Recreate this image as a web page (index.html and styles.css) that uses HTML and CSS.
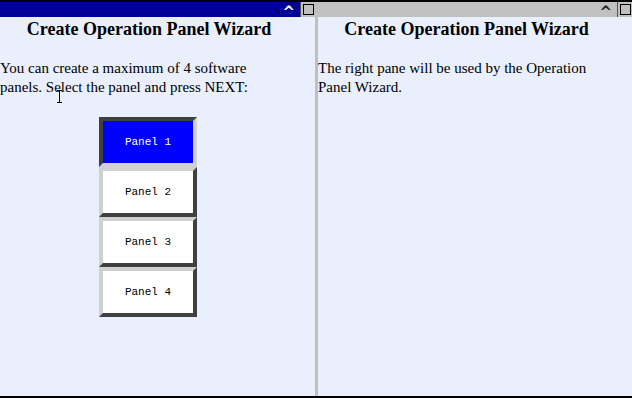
FILE: index.html
```html
<!DOCTYPE html>
<html lang="en">
<head>
    <meta charset="UTF-8">
    <title>Create Operation Panel Wizard</title>
    <link rel="stylesheet" href="styles.css">
</head>
<body>
    <div class="frame">
        <div class="pane left">
            <div class="titlebar active">
                <span class="caret">^</span>
                <span class="maxbox"><span></span></span>
            </div>
            <div class="content">
                <h1>Create Operation Panel Wizard</h1>
                <p class="intro">You can create a maximum of 4 software panels. Select the panel and press NEXT:</p>
                <div class="panels">
                    <button class="panel-btn selected">Panel 1</button>
                    <button class="panel-btn">Panel 2</button>
                    <button class="panel-btn">Panel 3</button>
                    <button class="panel-btn">Panel 4</button>
                </div>
                <!-- mouse pointer in the capture -->
                <svg class="ibeam" width="7" height="13" viewBox="0 0 7 13">
                    <path d="M1 0.5h5M3.5 0.5v12M1 12.5h5" stroke="#000" stroke-width="1" fill="none"/>
                </svg>
            </div>
        </div>
        <div class="divider"></div>
        <div class="pane right">
            <div class="titlebar">
                <span class="caret">^</span>
                <span class="maxbox"><span></span></span>
            </div>
            <div class="content">
                <h1>Create Operation Panel Wizard</h1>
                <p>The right pane will be used by the Operation Panel Wizard.</p>
            </div>
        </div>
    </div>
</body>
</html>
```

FILE: styles.css
```css
html, body {
    margin: 0;
    padding: 0;
    height: 100%;
}
body {
    font-family: 'Liberation Serif', 'Times New Roman', serif;
    font-size: 15px;
    color: #000;
    background: #e9effc;
    overflow: hidden;
}
.frame {
    display: flex;
    height: 394px;
    border-top: 2px solid #000;
    border-bottom: 2px solid #000;
}
.pane {
    display: flex;
    flex-direction: column;
    background: #e9effc;
}
.pane.left {
    width: 315px;
}
.pane.right {
    flex: 1;
}
.divider {
    width: 3px;
    background: #c0c0c0;
}
.titlebar {
    height: 15px;
    background: #c0c0c0;
    display: flex;
    justify-content: flex-end;
    align-items: center;
}
.titlebar.active {
    background: #000099;
}
.caret {
    font-family: 'DejaVu Sans', sans-serif;
    font-size: 15px;
    font-weight: bold;
    line-height: 15px;
    color: #222;
    margin-right: 5px;
    padding-top: 5px;
}
.titlebar.active .caret {
    color: #fff;
}
.maxbox {
    width: 15px;
    height: 15px;
    background: #c0c0c0;
    display: flex;
    align-items: center;
    justify-content: center;
    box-sizing: border-box;
    border-left: 1px solid #555;
}
.maxbox span {
    width: 9px;
    height: 9px;
    border: 1px solid #000;
}
.content {
    position: relative;
    flex: 1;
    padding-right: 17px;
}
h1 {
    font-size: 18px;
    font-weight: bold;
    text-align: center;
    margin: 2px 0 19px;
}
p {
    margin: 0;
    line-height: 19px;
}
.intro {
    max-width: 270px;
}
.panels {
    display: flex;
    flex-direction: column;
    align-items: flex-start;
    margin: 20px 0 0 99px;
}
.panel-btn {
    width: 98px;
    height: 50px;
    background: #fff;
    border: 4px solid;
    border-color: #d0d0d0 #404040 #404040 #d0d0d0;
    font-family: 'Liberation Mono', 'Courier New', monospace;
    font-size: 11px;
    color: #000;
    padding: 0;
    margin: 0;
}
.panel-btn.selected {
    background: #0000ff;
    color: #fff;
    border-color: #404040 #d0d0d0 #d0d0d0 #404040;
}
.ibeam {
    position: absolute;
    left: 56px;
    top: 73px;
}
```
